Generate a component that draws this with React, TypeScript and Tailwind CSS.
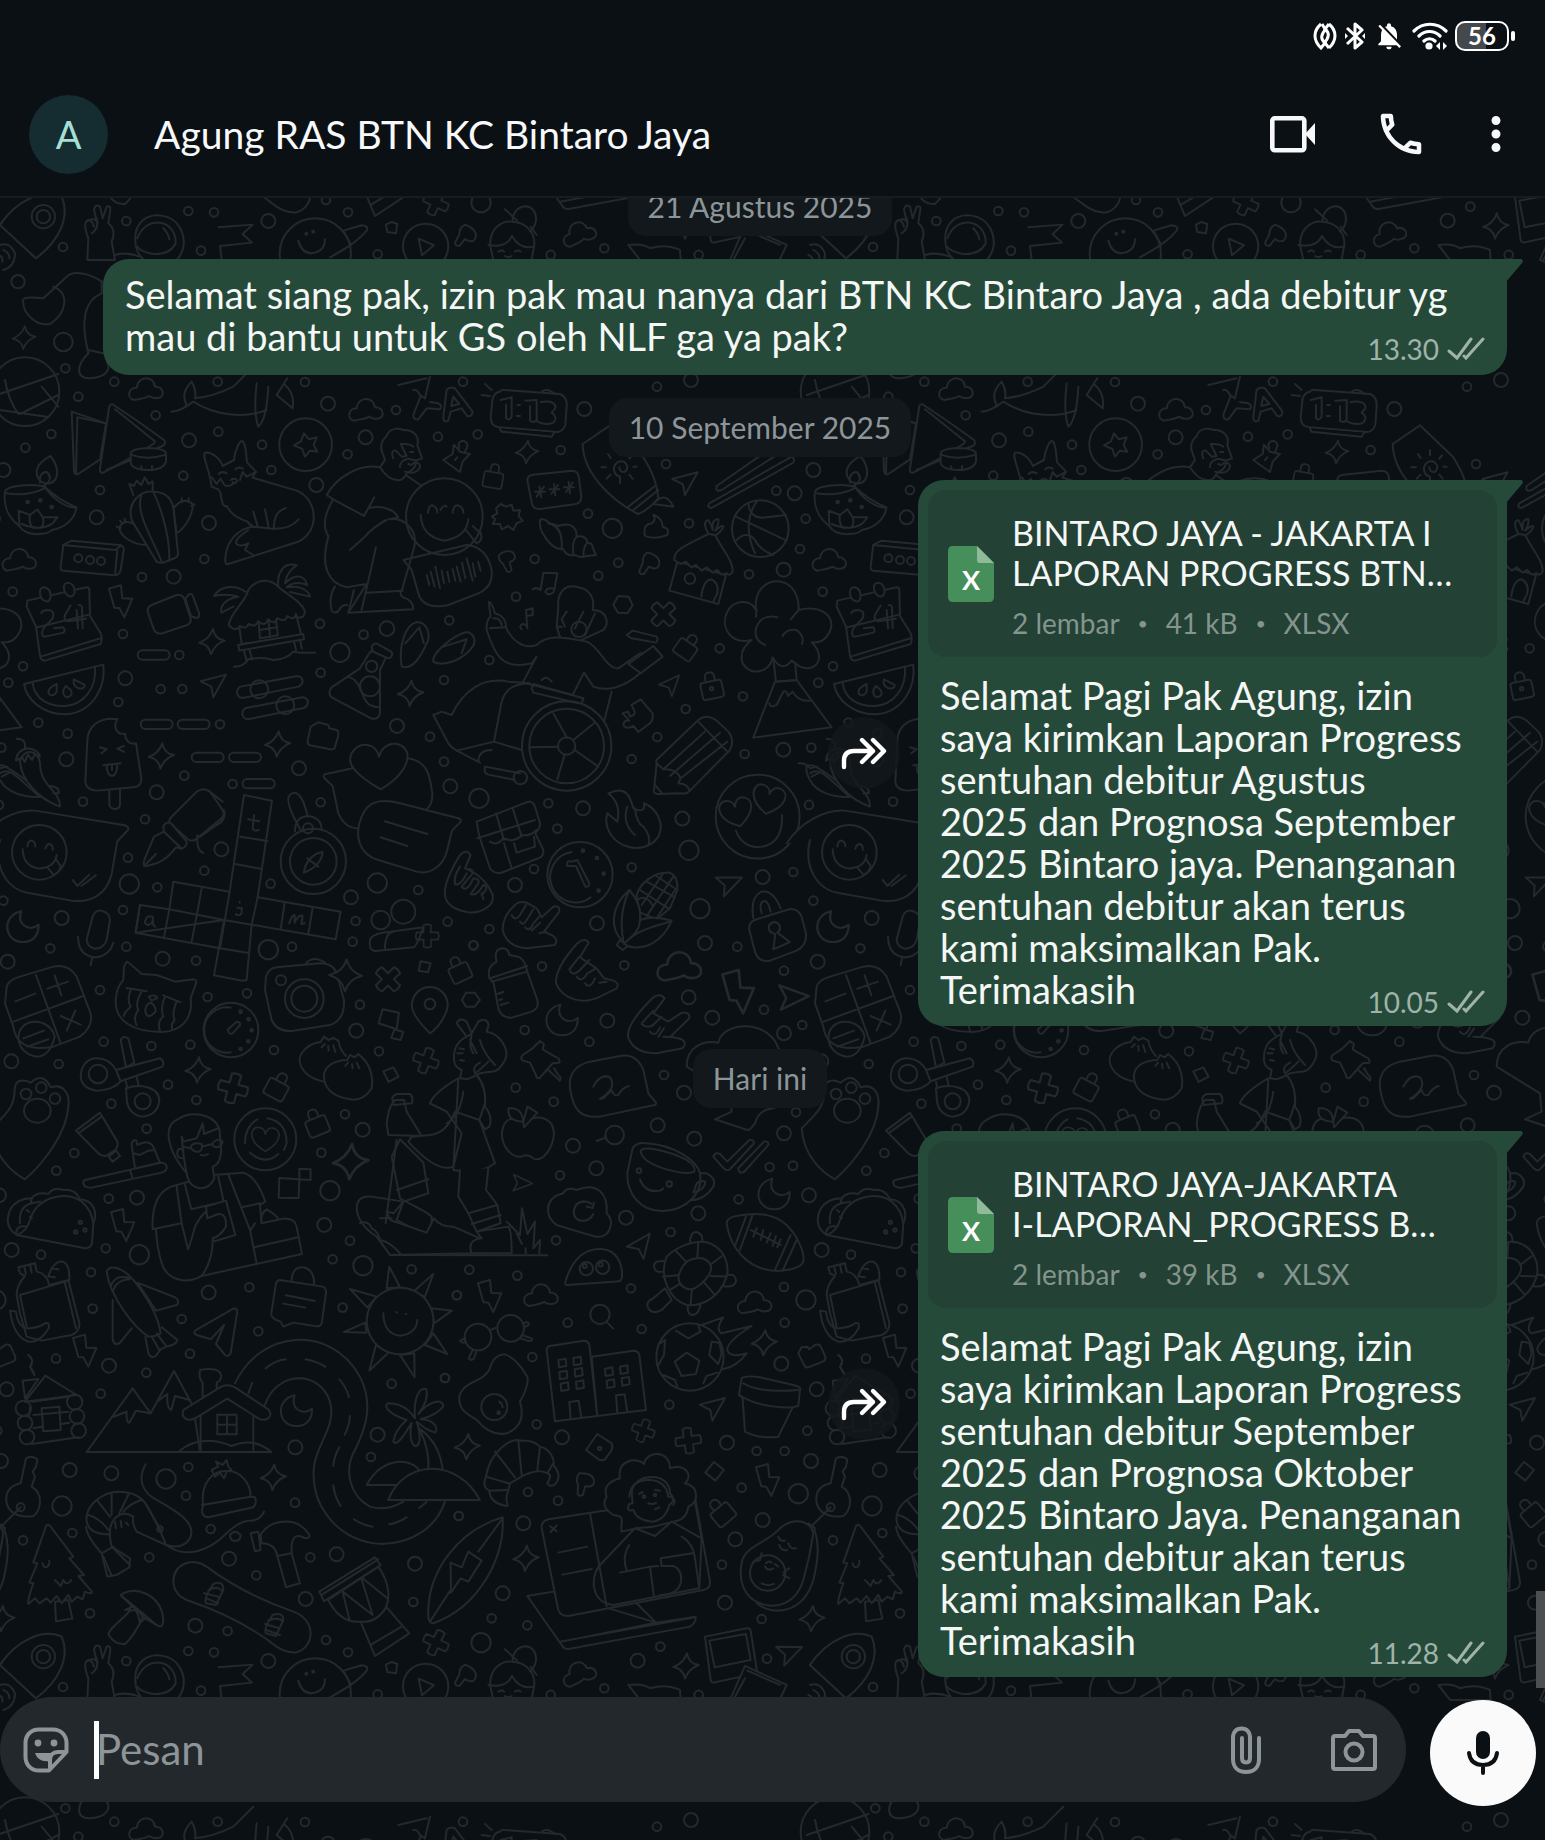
import React from 'react';
import { MdMoreVert, MdNotificationsOff, MdOutlineCall } from 'react-icons/md';

type Circle = [number, number, number];
type StampName = 'spark' | 'bolt' | 'cloud' | 'arrow' | 'plus' | 'lock' | 'moon' | 'pill' | 'flag' | 'heart';
type Stamp = [StampName, number, number, number?, number?];

interface DoodlePanel {
  x: number;
  y: number;
  circles: Circle[];
  stamps: Stamp[];
  shapes: string[];
  lines: string[];
}

const TILE_W = 810;
const TILE_H = 1440;

const STAMPS: Record<StampName, string> = {
  spark: 'M3,-38 Q8,-8 38,-3 Q8,8 -3,38 Q-8,8 -38,3 Q-8,-8 3,-38Z',
  bolt: 'M-36,-38 L0,-48 L4,-9 L34,-8 L10,48 L-5,20 L-20,19Z',
  cloud: 'M-35,32 C-58,28 -55,-5 -28,-5 C-25,-42 24,-42 27,-8 C55,-10 60,28 30,26 C20,28 16,24 10,20 C-4,28 -20,28 -35,32Z',
  arrow: 'M-38,-8 L38,-28 L0,40 L-6,8Z',
  plus: 'M-13,-38 Q0,-44 13,-38 L12,-13 L38,-13 Q44,0 38,13 L13,13 L13,38 Q0,44 -13,38 L-13,13 L-38,13 Q-44,0 -38,-13 L-13,-13Z',
  lock: 'M-24,-18 L24,-18 Q32,-18 32,-10 L32,26 Q32,34 24,34 L-24,34 Q-32,34 -32,26 L-32,-10 Q-32,-18 -24,-18Z M-14,-18 V-32 C-14,-50 14,-50 14,-32 V-18',
  moon: 'M-6,-46 C-70,-30 -54,48 0,46 C30,46 48,24 46,-6 C20,16 -20,-4 -6,-46Z',
  pill: 'M-34,-14 H34 A14,14 0 0 1 34,14 H-34 A14,14 0 0 1 -34,-14Z',
  flag: 'M-20,-32 C10,-40 30,-30 28,-8 C24,4 12,2 4,4 L2,30 Q-8,38 -14,30 L-18,2 Q-30,-16 -20,-32Z',
  heart: 'M0,40 C-70,0 -50,-50 -22,-44 C-8,-42 0,-32 0,-20 C4,-34 14,-44 28,-42 C60,-34 58,8 0,40Z',
};

// every panel is drawn at three times its final size
const PANELS: DoodlePanel[] = [
  {
    x: 0,
    y: 60,
    circles: [[54, 665, 20], [190, 846, 28], [196, 925, 13]],
    stamps: [['spark', 72, 833, 0, 0.9]],
    shapes: ['M70,730 C60,710 90,710 130,715 L200,650 C220,630 270,640 305,665 L305,700 C255,720 240,780 265,880 C225,920 230,955 270,955 C330,950 330,920 320,905 L480,880 L480,660 L305,665'],
    lines: ['M160,680 C210,700 200,760 150,792 C110,800 70,760 70,730', 'M265,870 L310,880'],
  },
  {
    x: 0,
    y: 380,
    circles: [
      [343, 5, 13], [235, 50, 13], [467, 106, 13], [154, 162, 13], [76, 203, 13], [655, 155, 13], [786, 194, 13],
      [653, 5, 13], [915, 6, 13], [1188, 90, 13], [1314, 170, 13], [1043, 223, 13], [814, 270, 13], [550, 287, 13],
      [300, 330, 13], [613, 537, 13], [426, 591, 13], [38, 635, 13], [369, 762, 13], [538, 825, 13], [69, 859, 13],
      [25, 908, 13], [482, 927, 13], [547, 927, 13], [355, 966, 13], [115, 1028, 13], [203, 1061, 13], [660, 1033, 13],
      [553, 1187, 13], [698, 1212, 13], [249, 1265, 13], [435, 1318, 13], [960, 731, 13], [1091, 764, 13],
      [962, 878, 13], [1348, 721, 13], [1332, 900, 13], [1290, 1070, 13], [1332, 1145, 13], [962, 1267, 13],
      [1389, 5, 13], [567, 181, 21], [984, 71, 21], [1097, 172, 21], [949, 315, 21], [290, 412, 21], [627, 429, 21],
      [521, 590, 21], [1161, 746, 22], [376, 895, 21], [199, 1138, 21], [1191, 1038, 21], [897, 1165, 21],
      [470, 1237, 21], [664, 1408, 21], [1351, 1219, 21], [10, 270, 21], [1020, 817, 29], [917, 194, 79],
      [75, 35, 103], [235, 535, 12], [270, 540, 12], [303, 543, 12], [83, 366, 4], [121, 361, 4], [155, 381, 4],
      [778, 928, 27], [856, 976, 27], [1115, 859, 17], [1110, 919, 30], [924, 1345, 15],
    ],
    stamps: [
      ['spark', 636, 785], ['spark', 1232, 940], ['spark', 484, 1128], ['spark', 833, 1092], ['bolt', 363, 664],
      ['cloud', 58, 540], ['cloud', 438, 28], ['cloud', 1098, 90], ['arrow', 640, 912], ['pill', 461, 825],
      ['pill', 470, 1033], ['pill', 581, 1033], ['pill', 623, 1132], ['pill', 735, 1132], ['pill', 776, 1211],
    ],
    shapes: [
      // samosas and bowl
      'M215,95 L318,130 L300,238 L235,282 Q222,285 222,270Z',
      'M328,78 Q335,68 345,78 L408,120 L492,180 Q500,190 488,198 L392,234 L310,278 Q298,280 300,266Z',
      'M392,222 Q392,206 445,204 Q500,206 498,222 L498,245 Q490,270 445,270 Q392,268 392,245Z',
      // oil lamp
      'M15,335 C20,315 100,310 134,320 C160,345 200,370 229,382 C225,420 190,445 155,450 Q150,462 110,463 Q70,460 58,438 C20,410 10,370 15,335Z',
      'M151,228 C170,250 178,280 165,300 C150,318 118,312 111,285 C105,260 130,240 151,228Z',
      // cactus
      'M400,345 L388,312 L402,318 L410,302 L424,315 L434,292 L446,312 L458,304 L458,335',
      'M520,385 C540,360 560,355 578,372 C580,400 560,440 530,460Z',
      'M402,432 C380,420 362,428 358,445 C362,470 400,495 440,495Z',
      'M470,545 L395,420 C380,370 420,330 460,335 C500,335 520,360 522,400 L534,520 Q534,530 525,534 L490,548 Q480,550 470,545Z',
      // fox
      'M635,320 C630,270 605,230 615,218 C635,215 660,235 668,258 L702,240 C705,210 720,175 730,185 C742,210 738,240 742,248 L768,275 L757,293 L890,332 C960,360 960,470 880,490 L685,552 Q675,555 676,540 C676,490 710,445 760,440 L742,425 C700,410 690,395 680,378 C660,385 668,335 655,328Z',
      // box with dots
      'M190,495 L215,482 L365,496 L372,506 L362,570 Q358,585 345,586 L190,572 Q180,570 182,560Z',
      // calendar
      'M82,662 L260,622 Q268,622 268,632 L270,708 L302,760 Q308,775 302,792 L135,842 Q122,842 120,828 L108,740 L80,680Z',
      'M120,640 Q118,622 134,622 Q152,626 152,650 Q150,666 138,664 Q122,660 120,640Z',
      'M192,626 Q190,608 206,608 Q224,612 224,636 Q222,650 210,650 Q194,644 192,626Z',
      // camcorder
      'M443,695 Q442,680 455,675 L530,645 Q545,642 552,655 L572,715 Q574,728 562,735 L488,760 Q470,764 462,750Z',
      'M556,655 L568,642 Q578,640 580,652 L598,702 Q598,714 588,714 L573,708Z',
      // watermelon
      'M72,912 L310,854 C318,920 280,995 200,1003 C130,1005 80,960 72,912Z',
      // beach hut
      'M738,636 C700,610 660,620 642,648 Q680,640 715,650 C680,655 660,675 664,698 L700,680',
      'M835,620 C830,580 850,545 890,556 Q860,575 855,610 C890,575 915,590 922,615 Q885,600 860,622 C900,615 925,630 930,650 L870,636',
      'M718,740 L725,792 L905,768 L890,710',
      'M686,735 C695,690 735,670 745,630 C770,595 810,595 835,620 C870,650 905,665 915,695 Q912,714 900,712 Q892,718 888,702 Q884,724 862,708 Q856,730 832,714 Q826,738 804,718 Q796,742 774,724 Q768,744 746,732 Q738,750 720,738 Q708,758 686,735Z',
      'M715,795 L910,762 L912,778 L718,812Z',
      // sliders
      'M722,920 L892,888 Q908,890 908,904 Q906,916 895,920 L728,954 Q712,952 711,938 Q712,924 722,920Z',
      'M738,984 L908,952 Q924,954 924,968 Q922,980 911,984 L744,1018 Q728,1016 727,1002 Q728,988 738,984Z',
      // flask
      'M1120,793 Q1128,788 1135,793 L1172,814 Q1180,820 1174,830 Q1168,838 1158,832 L1140,870 L1140,1000 Q1136,1020 1115,1016 L995,952 Q982,940 995,922 L1080,865 L1108,820 L1118,810 Q1112,800 1120,793Z',
      // ice lolly
      'M328,1225 L328,1275 Q332,1287 345,1287 Q358,1286 360,1275 L360,1225',
      'M262,1080 C265,1030 310,1010 352,1018 C338,1040 350,1065 376,1062 C374,1080 388,1095 408,1090 L424,1195 Q424,1222 400,1222 L290,1232 Q258,1230 256,1205Z',
      // chillies
      'M0,1180 C30,1160 50,1190 118,1250 C80,1255 20,1240 0,1200',
      'M60,1140 C80,1100 115,1115 120,1150 C120,1220 180,1230 180,1280 C120,1260 60,1200 60,1140Z',
      // flip flops
      'M1205,860 C1195,800 1215,735 1250,726 C1280,726 1292,760 1283,785 C1262,830 1240,870 1205,860Z',
      'M1300,845 C1295,820 1360,765 1400,756 C1425,760 1428,785 1418,800 C1390,840 1330,862 1300,845Z',
      // camera tag
      'M932,1040 L955,1027 L985,1035 L988,1045 L1010,1050 Q1018,1055 1014,1070 L1004,1104 Q1000,1110 990,1108 L930,1096 Q920,1092 924,1078Z',
      // speech bubble with tongue face
      'M-70,1390 C-30,1330 40,1288 105,1292 L370,1335 Q388,1338 384,1350 L352,1384 L335,1482 C320,1545 270,1570 215,1562 L90,1540 C20,1530 -20,1460 0,1380',
      // heart bubbles
      'M1058,1165 L975,1183 Q968,1188 973,1194 L998,1218 L1015,1300 Q1035,1345 1075,1345',
      'M1224,1135 C1290,1145 1290,1200 1297,1240 Q1298,1275 1280,1288',
      'M1142,1228 C1060,1180 1040,1150 1055,1120 C1080,1080 1130,1090 1137,1130 C1150,1080 1210,1080 1222,1120 C1228,1160 1190,1200 1142,1228Z',
      'M1125,1268 C1150,1258 1180,1265 1200,1270 L1375,1315 Q1388,1320 1380,1328 L1356,1352 L1342,1410 C1330,1460 1290,1485 1250,1475 L1135,1440 C1080,1425 1060,1370 1085,1310 Q1100,1275 1125,1268Z',
      // man carrying an emoji
      'M1140,262 C1080,250 1010,290 980,345 L1000,358 C950,440 980,490 1040,497 C1110,497 1110,440 1160,420 L1195,412 C1180,385 1140,375 1105,385 L1123,352 L1092,408 L1000,358',
      'M985,470 C960,560 985,610 1040,622 L1100,612 L1045,698 L1240,688 Q1240,660 1208,652 Q1196,640 1206,630 L1243,500 C1255,450 1210,410 1170,418',
      'M1148,220 C1138,200 1145,180 1160,168 C1170,140 1200,145 1210,150 C1240,148 1260,170 1252,195 L1266,235 L1248,242 C1250,275 1215,275 1218,285 Q1205,305 1190,300 Q1165,300 1140,262 L1155,240Z',
      // star pin
      'M1330,240 L1358,222 L1362,194 L1380,215 L1410,222 L1388,245 L1380,276Z',
    ],
    lines: [
      'M-10,45 L175,-18 M0,90 L140,110 M15,0 Q25,60 55,102 M125,20 L175,80 M60,102 L175,45',
      'M912,160 L927,178 L950,172 L941,195 L952,215 L930,212 L915,230 L907,207 L882,196 L903,184Z',
      'M515,95 Q550,90 560,75 Q540,40 575,5 Q590,30 585,55 Q640,50 700,20 L760,-40 M515,95 Q540,95 580,65 C650,110 740,115 800,90 M770,10 Q760,100 775,140 Q800,120 805,20 M830,45 L878,85 Q885,40 855,15 M862,-5 L830,45',
      'M1240,30 Q1250,25 1260,45 L1275,55 L1290,-10 M1262,48 L1240,105 Q1240,120 1255,118 L1280,85 L1320,88 Q1328,75 1315,70 L1290,66 M1195,15 L1280,-5',
      'M1330,110 L1340,30 Q1350,18 1365,25 L1418,95 Q1416,112 1402,108 L1385,85 L1352,95 L1345,122 Q1330,130 1330,110 M1360,50 L1378,72 L1354,78Z',
      'M1378,205 Q1370,185 1390,182 Q1408,190 1400,205 L1395,215 M1365,240 L1372,232',
      'M232,112 L318,130 M232,112 L228,282 M392,240 L320,270 M345,88 L460,180 Q470,185 460,192 L440,204 M392,224 Q440,242 498,224',
      'M424,258 V266 M456,258 V266',
      'M120,308 Q116,278 140,276 Q156,290 146,306 L128,320 M135,320 C150,345 190,385 229,382 M20,340 Q80,350 134,325 M58,438 L56,392 L90,405 L112,388 L128,412 L172,412 L158,430 Q120,455 65,432 M90,405 Q85,430 100,444 M128,412 Q135,435 120,444',
      'M424,345 C405,400 460,480 485,545 M460,335 C490,400 510,480 508,542 M350,440 L362,444 M360,422 L368,430 M374,416 L376,426 M545,355 L546,366 M566,355 L566,366 M584,374 L574,378',
      'M656,282 Q665,272 680,280 M706,268 Q715,258 728,266 M636,292 L650,312 L662,296 L674,316 Q690,322 700,310 M720,300 L728,276 L740,290 L768,276 M692,300 Q705,292 712,302 Q704,316 698,306 M760,395 L772,436 M795,388 L806,442 M822,445 Q820,395 858,384 M742,425 L755,440 L820,446 Q870,448 896,418 M745,450 Q700,480 710,492 Q720,502 745,490 L735,510 L760,525',
      'M190,495 L345,510 L360,500 M352,512 L345,585',
      'M112,742 L268,704 M122,830 L302,775',
      'M124,700 Q126,690 146,690 Q166,692 158,715 L130,745 Q120,770 136,770 L190,758 Q198,752 190,742 L162,745 M212,676 L195,705 Q190,722 205,724 L258,716 M236,676 Q242,672 246,682 L248,745 M230,690 L234,745',
      'M98,910 C105,960 150,980 195,978 C250,975 290,925 285,862 M170,912 Q140,925 146,942 Q160,952 170,935Z M198,918 Q180,940 200,952 Q222,948 212,930Z M222,898 Q216,915 235,925 Q256,928 254,915Z',
      'M776,728 L780,775 L834,766 L828,720 M806,724 L810,770 M778,750 L832,742 M732,812 L740,842 M748,808 L756,838 M882,784 L888,810 M900,780 L906,806 M702,860 Q730,862 745,838 Q790,830 820,840 Q860,838 880,815 Q910,820 945,818',
      'M1115,813 L1158,832 M1042,890 C1090,900 1080,960 1110,975 Q1130,985 1140,980',
      'M300,1102 L320,1108 L304,1120 M372,1098 L352,1106 L372,1116 M310,1156 L362,1150 M320,1156 Q320,1186 336,1188 Q352,1184 352,1152 M336,1155 V1170',
      'M50,1076 Q80,1076 74,1105 M48,1142 Q50,1110 85,1105 Q115,1110 120,1130 L104,1124 L96,1140 L84,1124 L74,1146 L66,1132Z M0,1165 L22,1160 M5,1190 L28,1178 M148,1218 Q180,1220 176,1240 L160,1240',
      'M1216,790 L1258,742 L1272,790 M1330,800 L1400,778 L1385,820',
      'M82,1400 Q84,1382 95,1382 Q106,1386 106,1400 M136,1406 Q140,1392 150,1392 Q160,1398 158,1410 M68,1408 Q70,1460 118,1466 Q165,1462 170,1425 M142,1462 L160,1484 Q180,1478 182,1458 L168,1438 M218,1500 L232,1518 L268,1484 M244,1518 L288,1486',
      'M905,1355 Q850,1260 870,1245 Q890,1225 910,1265 L924,1310 M885,1355 Q885,1310 924,1308 Q965,1312 965,1350',
      'M1154,1324 L1282,1362 M1142,1372 L1222,1398',
      'M1005,620 Q985,650 995,692 Q1006,704 1018,690 Q1022,675 1042,675 M1062,630 L1045,698 M1128,502 L1085,690 M1100,638 L1208,632 M1050,510 L1090,475 Q1120,440 1160,420 M1218,285 L1265,318',
      'M1180,235 Q1170,210 1188,212 L1205,230 L1220,228 L1202,192 Q1230,190 1240,200 M1230,216 L1240,216 M1200,262 Q1200,240 1225,236 L1250,242 M1225,252 Q1238,258 1240,250 Q1262,245 1260,262 Q1250,285 1215,275',
    ],
  },
  {
    x: 440,
    y: 380,
    circles: [
      [113, 163, 13], [362, 210, 13], [651, 20, 13], [678, 252, 13], [444, 401, 13], [747, 430, 13], [284, 537, 13],
      [475, 587, 13], [535, 548, 13], [228, 650, 13], [148, 840, 13], [1009, 332, 13], [1097, 416, 13],
      [1080, 507, 13], [927, 583, 13], [839, 805, 13], [909, 949, 13], [737, 987, 13], [652, 1071, 13],
      [575, 1137, 13], [914, 1122, 13], [325, 1270, 13], [352, 1346, 13], [1107, 1275, 13], [1114, 1103, 13],
      [433, 87, 21], [753, 0, 21], [1064, 340, 21], [1031, 569, 21], [1030, 1109, 21], [429, 1285, 21],
      [727, 1316, 21], [517, 445, 29], [117, 1255, 29], [747, 1411, 29], [13, 410, 115], [961, 446, 85],
      [380, 1098, 134], [380, 1098, 112], [380, 1098, 26], [953, 1310, 126], [750, 596, 16], [815, 926, 5],
      [420, 1484, 98], [417, 748, 23], [241, 1193, 20], [1228, 1417, 82],
    ],
    stamps: [
      ['spark', 261, 216, 0, 0.9], ['arrow', 735, 305], ['arrow', 690, 915, -10, 0.85], ['plus', 670, 703, 45],
      ['lock', 160, 293, 10, 0.9], ['lock', 740, 803, 35, 0.95], ['lock', 815, 922, -12],
      ['flag', 625, 555, 30], ['flag', 204, 545, -20, 0.9], ['heart', 890, 1300, -15], ['heart', 985, 1262, 10],
    ],
    shapes: [
      // clock 1:13
      'M180,35 Q185,28 195,30 L360,42 Q382,50 380,80 L376,135 Q368,156 350,156 L178,142 Q152,140 152,110 L158,55 Q165,36 180,35Z',
      'M180,145 L184,155 L335,170 L342,158',
      'M262,300 Q262,286 280,284 L395,272 Q412,272 416,288 L424,350 Q424,368 408,372 L300,387 Q280,388 276,372Z',
      'M156,410 L172,400 L168,385 L182,372 L198,380 L215,374 L220,392 L240,390 L236,408 L248,422 L230,430 L220,450 L205,438 L185,448 L180,432 L158,432 L166,418Z',
      // shell
      'M300,420 Q310,412 330,430 L355,438 C390,425 410,440 410,470 Q440,465 442,488 L455,492 Q460,510 468,525 L440,528 Q420,535 405,525 Q380,530 370,508 C330,510 295,450 300,420Z',
      // shawl
      'M428,192 L510,136 L610,232 C640,280 650,310 655,355 Q625,390 595,402 C530,370 430,290 428,192Z',
      'M655,358 Q680,340 700,380 L640,372Z',
      'M614,455 Q610,435 635,430 Q650,420 640,404 Q668,415 668,440 Q690,445 682,465 Q650,478 620,470 Q610,465 614,455Z',
      // fort tower
      'M712,545 L688,632 L835,672 L858,585Z',
      'M703,540 C700,510 730,500 805,462 L826,465 C840,500 880,540 878,575 Q870,590 860,580 L845,584 L832,570 L818,578 L800,562 L785,572 L768,555 L754,562 L738,545 L722,552Z',
      // chopsticks
      'M830,318 L1035,175 L1050,200 L845,330 Q825,338 830,318Z',
      'M808,370 L1055,230 Q1066,236 1060,248 L815,384 Q800,384 808,370Z',
      'M278,628 Q290,620 302,630 L310,578 L352,580 L342,635 Q325,650 316,636 Q320,622 342,626',
      'M520,674 L535,648 L566,650 L578,676 L562,700 L534,698Z',
      // flower tree volcano
      'M1005,905 L940,1073 L1175,1042 L1070,900Z',
      'M948,690 C935,580 1080,570 1076,690 C1150,670 1200,720 1160,770 Q1145,790 1115,787 C1160,830 1130,880 1080,860 L1055,842 Q1025,880 998,832 C990,880 930,890 908,850 Q895,810 935,780 C870,795 840,740 862,695 C880,660 930,655 948,690Z',
      // pencil
      'M650,1150 Q645,1140 655,1135 L775,1020 Q800,1000 830,1022 L865,1055 Q885,1080 870,1110 L750,1232 Q742,1242 730,1240 L650,1242 Q640,1240 642,1230Z',
      // wheelchair figure
      'M355,680 C350,640 375,610 415,622 C450,628 465,655 458,690 C500,690 510,730 490,750 L420,782 Q390,800 365,788 L350,740Z',
      'M146,665 Q155,665 165,700 Q200,710 198,742 C215,780 250,810 290,795 C320,765 360,768 440,785 C480,800 500,870 535,865 L600,820 Q625,820 628,832 L600,880 C550,925 500,935 460,920 L432,878 L398,945 L248,908 L290,830 L275,850 C190,870 165,830 140,750 Q138,720 152,710Z',
      'M560,765 L578,752 L650,770 Q656,778 648,788 L575,775Z M565,852 L640,798 L668,830 L602,880Z',
      'M-20,1005 L5,995 L35,1005 C70,930 130,890 205,905 L270,910 C200,910 185,950 180,990 L162,1085 L50,1112 Q30,1100 25,1090Z',
      // puzzle
      'M548,1000 L565,995 L570,1010 Q590,1005 582,990 L575,975 L602,958 L638,1000 Q640,1020 630,1030 L595,1056 L580,1038 Q560,1050 550,1035 Q552,1020 568,1022Z',
      // flame
      'M505,1240 C560,1215 570,1250 580,1285 C610,1300 615,1285 612,1270 C650,1285 675,1330 655,1370 C635,1400 600,1408 570,1402 C515,1390 490,1340 502,1300 L532,1325 C540,1290 530,1260 505,1240Z',
      // gift box
      'M110,1325 L265,1265 Q280,1265 285,1280 L300,1330 Q300,1350 285,1358 L310,1410 Q312,1430 295,1435 L180,1480 Q160,1480 150,1465 L118,1370Z',
      // chilli pair
      'M1100,1160 C1120,1145 1140,1170 1260,1250 C1200,1255 1090,1220 1100,1160Z',
    ],
    lines: [
      'M182,60 L215,52 V110 Q208,124 198,115 V75 M232,75 h8 M230,108 h10 M256,62 L290,60 V120 Q280,130 270,122 V78 M302,66 Q350,60 346,85 L335,98 Q355,110 340,128 Q320,138 292,125 M305,35 Q320,22 345,42 M125,45 L150,48 M135,12 L155,30',
      'M285,335 L315,335 M298,320 L304,352 M290,350 L312,320 M328,328 L358,328 M342,312 L346,346 M334,342 L354,315 M372,322 L402,322 M386,306 L390,340 M378,336 L398,308',
      'M565,380 L645,318 M580,390 L655,330 M540,290 Q520,285 522,262 Q530,240 552,245 Q570,260 556,275 Q540,280 538,262 M540,226 V210 M512,234 L504,222 M498,262 H484 M512,284 L500,296 M540,292 V310 M568,284 L578,296 M580,260 H590 M568,236 L576,226',
      'M784,650 Q790,600 815,598 Q838,610 832,640 L820,665 M805,460 Q785,425 805,420 Q812,430 818,450 Q815,415 835,418 Q838,430 826,452 Q850,430 850,442 Q840,460 826,466',
      'M325,430 Q370,440 365,505 M410,470 Q395,485 400,522 M442,488 Q430,500 430,530',
      'M888,410 L1040,482 M925,370 Q930,420 980,412 L1038,405 M945,520 Q905,430 950,365 M890,480 Q920,450 945,480 Q960,510 1000,525',
      'M948,710 L950,690 M1052,718 L1076,690 M975,795 Q940,780 948,745 Q965,700 1012,712 M1028,768 Q1040,745 1070,750 Q1095,770 1086,792 M1000,835 L1008,905 L1070,900 L1066,855 M988,970 Q990,985 1010,975 L1030,935 Q1040,930 1044,948 L1058,935 Q1075,965 1110,962',
      'M650,1150 L670,1168 L795,1055 M670,1168 Q710,1165 722,1195 L862,1085 M722,1195 L715,1210 Q745,1212 748,1232 M690,1188 L840,1058 M775,1025 L862,1115 M645,1215 L665,1238',
      'M430,695 L405,745 M465,700 L435,765 M380,695 L365,718 L375,740 M352,740 L366,740 M160,715 Q180,712 185,735 M150,745 L195,742',
      'M380,1072 L340,1000 M400,1080 L462,1030 M404,1110 L475,1160 M374,1124 L352,1198 M354,1100 L270,1102 M275,925 L280,912 L430,955 Q428,972 415,970 L280,938Z M305,900 Q320,885 335,905 M515,935 L492,1025 M135,1160 Q130,1180 145,1184 L225,1200 M135,1160 L240,1180 M162,1085 L245,1110 M115,1145 Q115,1110 155,1110 M50,1112 L120,1148',
      'M562,1280 Q545,1330 585,1365 M585,1285 Q590,1330 610,1340 Q635,1370 625,1395',
      'M888,1352 Q905,1400 955,1402 Q1030,1395 1026,1305',
      'M112,1375 L285,1320 M168,1300 L192,1380 M218,1285 L245,1370 M150,1385 Q170,1400 190,1375 Q225,1390 245,1365 Q270,1370 290,1350 M192,1390 L215,1465 M222,1390 L230,1418 L285,1400 L282,1370',
      'M1,390 Q12,372 20,380 M38,398 Q40,375 55,376 Q70,382 70,398 M-36,398 Q-34,376 -22,376 Q-8,382 -8,398 M85,418 Q80,470 13,482 Q-55,470 -58,405 M76,448 L110,490 Q130,480 122,460 L98,438',
      'M-110,540 L80,495 Q140,500 155,570 Q160,620 115,640 L25,675 Q-40,690 -62,650 L-85,570Z',
      'M-40,585 L-32,615 M-28,575 L-16,620 M-14,560 L0,625 M5,572 L12,610 M22,575 L28,605 M38,568 L46,602 M50,560 L62,605 M66,548 L76,595 M80,535 L98,602 M98,550 L106,590 M114,545 L122,572',
      'M245,748 Q235,740 248,732 Q265,735 262,745 L258,690 L278,685 V705 L260,708',
      'M1076,1150 Q1100,1148 1110,1165 M1120,1180 L1140,1195 L1115,1200',
    ],
  },
  {
    x: 0,
    y: 840,
    circles: [
      [384, 53, 13], [613, 92, 13], [472, 142, 13], [812, 131, 13], [369, 210, 13], [151, 325, 13], [379, 320, 13],
      [588, 362, 13], [876, 320, 13], [1255, 150, 13], [1067, 243, 13], [1058, 305, 13], [1343, 245, 13],
      [300, 450, 13], [623, 471, 13], [741, 460, 13], [1080, 494, 13], [311, 605, 13], [454, 618, 13], [571, 614, 13],
      [822, 630, 13], [176, 672, 13], [504, 734, 13], [1137, 634, 13], [334, 791, 13], [589, 780, 13],
      [1035, 823, 13], [440, 866, 13], [964, 938, 13], [223, 939, 13], [169, 992, 13], [326, 1076, 13],
      [317, 1225, 13], [1050, 1202, 13], [998, 1258, 13], [123, 1244, 13], [273, 1297, 13], [748, 1342, 13],
      [1235, 1288, 13], [278, 1406, 13], [1028, 1403, 13], [1371, 1366, 13], [10, 182, 13], [1420, 316, 13],
      [185, 234, 21], [23, 365, 21], [488, 356, 21], [1053, 172, 21], [1069, 572, 21], [34, 664, 21], [1088, 869, 21],
      [411, 1073, 21], [973, 1155, 21], [35, 1230, 21], [626, 1358, 21], [388, 132, 29], [1132, 129, 29],
      [805, 329, 29], [990, 1052, 29], [418, 1244, 29], [1089, 1277, 29], [118, 37, 82], [940, 64, 98],
      [940, 64, 70], [693, 570, 82], [796, 898, 93], [722, 515, 4], [746, 538, 4], [755, 571, 4], [745, 604, 4],
      [722, 627, 4], [1142, 240, 28], [1210, 215, 36],
    ],
    stamps: [
      ['spark', 594, 690], ['spark', 1052, 965, 0, 1.4], ['moon', 69, 260], ['plus', 1164, 418, 45],
      ['plus', 699, 745, 15, 1.1], ['lock', 832, 742, 28], ['lock', 1378, 392, -25, 0.95],
      ['lock', 950, 852, -22], ['bolt', 369, 1155], ['heart', 796, 900, 0, 0.85], ['plus', 1282, 288, 0, 0.85],
      ['plus', 1278, 662, 20, 0.95],
    ],
    shapes: [
      // pen nib and ink
      'M510,-50 Q505,-60 515,-70 L590,-145 Q610,-160 630,-145 L668,-90 Q675,-75 665,-65 L585,0 Q570,5 560,-5Z',
      'M490,-40 Q500,-60 515,-48 L560,5 Q562,20 545,26 L492,-20Z',
      'M462,-10 L492,-25 L545,26 L528,22 Q505,55 470,70 L440,78 Q428,78 432,62Z',
      // crossword
      'M520,125 L689,155 L732,-135 L816,-118 L773,172 L1022,215 L1007,298 L755,254 L740,420 L727,422 L642,406 L672,240 L407,278 L420,195 L508,208Z',
      // microphone
      'M278,230 Q285,210 305,212 Q330,218 330,240 L320,300 Q312,325 285,326 Q260,320 260,298Z',
      // calculator
      'M20,440 Q25,420 60,410 L160,380 Q205,370 230,410 L272,520 Q280,560 240,590 L160,620 Q50,640 40,560 L15,490Z',
      // crying cat
      'M380,365 Q388,368 425,402 L470,405 L525,425 L580,418 Q592,420 588,430 L572,475 C580,540 540,575 485,576 C400,575 345,545 347,480 Q350,440 370,420 L372,380Z',
      // camera
      'M798,410 Q805,385 830,382 L960,370 Q1000,370 1010,400 L1032,480 Q1035,540 990,555 L875,573 Q830,575 815,540 L795,450Z',
      'M1040,358 Q1048,395 1086,408 Q1048,415 1035,454 Q1028,418 988,405 Q1030,395 1040,358Z',
      // scissors
      'M362,600 Q370,585 385,595 L403,668 L378,682Z',
      'M242,710 C245,640 320,640 348,690 L480,655 Q495,662 488,680 L362,724 Q340,750 290,752 Q245,745 242,710Z',
      'M378,745 C420,730 480,740 478,785 Q470,828 425,830 Q380,820 380,770Z',
      // dumplings
      'M970,725 C900,710 890,660 905,640 Q925,610 962,606 L972,590 L985,600 L1000,594 L1015,602 Q1020,630 1038,648',
      'M972,705 C975,675 1010,660 1042,660 L1050,645 L1064,652 L1075,642 L1088,654 C1115,680 1120,720 1115,745 Q1090,785 1050,778 C1000,770 970,745 972,705Z',
      'M1110,300 Q1115,280 1170,275 L1270,262 Q1250,320 1240,322 L1125,333 Q1105,330 1110,300Z',
      'M1290,580 C1250,540 1232,510 1236,490 C1245,425 1335,425 1343,490 C1345,515 1320,560 1290,580Z',
      'M1148,508 L1197,518 L1190,568 L1136,550Z M1183,568 L1210,576 L1202,600 L1174,594Z M1150,694 L1180,682 L1196,710 L1166,726Z M1262,364 L1292,370 L1284,397 L1256,392Z',
      'M1386,480 L1398,458 L1424,458 L1440,480 L1424,500 L1398,500Z',
      // paw
      'M-25,865 C20,820 45,800 44,745 Q50,710 92,728 Q130,695 152,742 C190,730 210,760 205,800 C200,880 130,970 75,1018 C40,1000 -20,950 -25,865Z',
      // paint tube
      'M228,872 L300,818 L352,905 Q356,920 345,930 L318,948 Q305,950 295,940Z M326,950 L348,932 L360,948 L338,965Z',
      'M395,915 Q395,900 408,900 L412,915 Q450,895 462,925 L480,968 L405,985Z',
      'M255,1020 L485,968 Q502,970 500,985 Q498,995 485,998 L275,1043 Q255,1045 250,1032 Q248,1022 255,1020Z',
      // taco
      'M50,1185 Q10,1160 30,1110 Q50,1075 95,1075 Q110,1055 145,1062 Q160,1040 190,1050 Q225,1045 240,1078 C280,1080 295,1120 280,1150 L276,1210 Q272,1225 255,1225Z',
      // man with book
      'M458,1165 C455,1090 480,1045 530,1035 L640,1005 L730,998 Q770,1010 796,1085 L780,1095 L785,1150 L850,1136 Q885,1135 890,1160 L906,1242 L605,1308 C560,1335 500,1320 485,1270 Q470,1220 468,1168Z',
      'M560,1000 C500,930 490,860 530,840 C570,810 640,820 658,866 L662,910 Q668,970 638,980 L643,1015 Q630,1045 600,1045 Q570,1040 562,1010Z',
      // two boxes
      'M838,1014 L898,1018 L896,1074 L836,1073Z M898,986 L932,988 L932,1020 L898,1018Z',
      // shopping bottle
      'M50,1365 Q50,1335 75,1308 L60,1300 L55,1282 L105,1270 L110,1295 Q140,1300 148,1335 L205,1320 L238,1450 Q240,1475 215,1485 L125,1502 L80,1490 L60,1420Z',
      // plane
      'M412,1328 L525,1372 Q542,1385 530,1395 L468,1412Z',
      'M338,1380 V1500 Q345,1520 360,1508 L395,1465',
      'M320,1295 C330,1270 370,1285 400,1320 C440,1370 475,1430 482,1480 Q470,1490 445,1490 C400,1460 330,1370 320,1295Z',
      // robot bag
      'M840,1320 L968,1340 Q980,1345 978,1360 L965,1450 Q960,1462 945,1458 L880,1448 L850,1460 L842,1445 Q812,1435 814,1420 L828,1330 Q832,1320 840,1320Z',
    ],
    lines: [
      'M432,78 L468,42 M592,-15 Q590,35 610,38 M630,-145 L668,-115 M672,-90 Q680,-60 650,-45 L600,-10',
      'M508,208 L672,240 L755,254 M508,208 L492,292 M605,145 L590,228 L575,304 M689,155 L660,325 L742,338 M773,172 L755,254 M854,188 L842,268 M938,204 L925,282 M706,72 L785,87 M721,-10 L802,3 M407,278 L660,325 M407,278 L420,195',
      'M436,242 Q440,225 458,230 Q462,250 445,255 Q432,252 436,242 M458,230 L460,255 L466,260 M719,185 v3 M708,222 Q715,230 724,222 L726,205 L712,203 M868,250 Q875,225 884,225 L884,248 Q895,222 908,228 L904,252 L914,250',
      'M745,-62 L778,-56 M762,-75 L758,-35 Q762,-25 776,-30',
      'M912,98 C915,65 940,40 968,36 C965,65 945,85 912,98 M922,55 L955,80',
      'M234,290 Q235,350 290,352 Q330,345 340,308 M276,355 L272,376',
      'M108,405 L182,610 M40,545 L250,468 M46,484 L106,461 M142,446 L204,425 M164,406 L184,466 M182,528 L242,554 M226,512 L200,572 M70,595 L132,572 M82,620 L145,598 M55,595 C55,530 150,530 164,590 Q150,650 110,650 Q60,640 55,595',
      'M380,444 L440,454 M490,466 L542,487 M392,450 Q380,480 392,500 Q370,520 372,528 M424,456 Q405,490 415,510 Q398,530 410,555 M495,470 Q480,500 490,530 Q470,545 480,572 M530,485 Q515,520 524,540 Q510,555 518,570 M446,470 Q470,462 472,474 L455,482Z M436,508 Q440,490 452,488 Q470,500 466,515 Q455,530 444,528 Q434,520 436,508',
      'M918,370 Q940,345 975,368 M692,503 A68,68 0 1 0 692,637 M684,568 L710,545 Q722,545 720,555 L698,580 Q685,585 684,568',
      'M913,476 m-58,0 a58,58 0 1 0 116,0 a58,58 0 1 0 -116,0 M913,476 m-39,0 a39,39 0 1 0 78,0 a39,39 0 1 0 -78,0 M843,421 m-15,0 a15,15 0 1 0 30,0 a15,15 0 1 0 -30,0',
      'M294,702 m-28,0 a28,28 0 1 0 56,0 a28,28 0 1 0 -56,0 M428,784 m-24,0 a24,24 0 1 0 48,0 a24,24 0 1 0 -48,0 M348,690 L362,724 M378,725 L382,745 M410,710 L416,738',
      'M112,812 m-40,0 a40,36 0 1 0 80,0 a40,36 0 1 0 -80,0 M78,762 m-16,0 a16,16 0 1 0 32,0 a16,16 0 1 0 -32,0 M124,743 m-16,0 a16,16 0 1 0 32,0 a16,16 0 1 0 -32,0 M165,776 m-16,0 a16,16 0 1 0 32,0 a16,16 0 1 0 -32,0',
      'M965,622 L975,612 M985,618 L986,632 M1000,616 L1006,636 M1036,678 L1044,668 M1056,672 L1058,685 M1070,668 L1078,685',
      'M1155,325 Q1155,280 1180,275 M1290,492 m-16,0 a16,16 0 1 0 32,0 a16,16 0 1 0 -32,0',
      'M238,878 L305,830 M390,990 L398,1015 M400,940 L420,945 L445,932 L465,930',
      'M50,1185 Q80,1175 90,1140 C110,1070 200,1050 245,1085 Q275,1110 280,1150 M60,1150 Q55,1100 95,1090 L120,1085 M95,1075 L92,1090 M80,1110 l8,6 M90,1130 l6,4 M48,1180 Q50,1155 80,1160 M241,1147 m-5,0 a5,5 0 1 0 10,0 a5,5 0 1 0 -10,0 M227,1176 m-5,0 a5,5 0 1 0 10,0 a5,5 0 1 0 -10,0 M255,1170 m-5,0 a5,5 0 1 0 10,0 a5,5 0 1 0 -10,0',
      'M545,890 L550,905 L590,895 L608,850 L612,882 L655,865 M550,930 Q530,920 532,945 Q535,955 550,955 M572,922 Q578,905 605,912 Q610,925 598,935 Q580,938 572,922 M638,910 Q650,892 668,905 Q665,920 650,922 Q636,920 638,910 M606,920 L636,912 M570,925 L550,920 M602,945 Q612,950 624,942 M545,890 C550,950 555,980 562,1010 M530,1040 L545,1150 L564,1228 Q575,1200 585,1160 Q600,1130 618,1115 M458,1168 L545,1150 M555,1035 L574,1108 L640,1092 M655,1010 L670,1080 M685,1005 L750,1170 L770,1270 M725,1102 L780,1090 M618,1100 L678,1082 L706,1185 L640,1205 M618,1100 L622,1135 L655,1122 Q680,1120 678,1160 Q660,1190 638,1195 Q640,1260 605,1308 M785,1150 Q780,1120 800,1108 Q830,1125 835,1138 M752,1170 L765,1150 M762,1222 L895,1192',
      'M735,910 Q735,860 772,838 M802,835 Q860,845 860,910 L852,930 M750,938 Q795,978 835,942',
      'M60,1365 L205,1322 M72,1278 L78,1302 M90,1275 L95,1298 M145,1310 Q160,1260 190,1265 Q210,1275 208,1320 M150,1310 L165,1312 M155,1285 L175,1288 M195,1330 L228,1465 M60,1365 L80,1460',
      'M30,1412 L48,1415 Q55,1470 90,1465 Q120,1462 135,1450 Q150,1445 146,1465 Q120,1510 85,1505 Q40,1490 30,1412Z',
      'M332,1340 Q345,1300 390,1315 M340,1350 Q350,1320 388,1318 M875,1325 Q875,1280 910,1282 Q945,1290 942,1335 M858,1366 L944,1383 M850,1391 L916,1403',
      'M436,1490 L445,1540 Q455,1560 470,1545 L480,1530 L498,1520 Q530,1515 532,1500 L485,1462 M455,1490 L478,1530 M470,1480 L500,1520',
    ],
  },
  {
    x: 440,
    y: 840,
    circles: [
      [282, 87, 13], [575, 82, 13], [1060, 96, 13], [148, 267, 13], [101, 316, 13], [306, 379, 13], [553, 376, 13],
      [892, 320, 13], [1032, 392, 13], [972, 509, 13], [1087, 555, 13], [254, 570, 13], [448, 605, 13],
      [672, 705, 13], [227, 743, 13], [341, 785, 13], [1068, 817, 13], [360, 1006, 13], [1059, 977, 13],
      [989, 981, 13], [896, 1078, 13], [348, 1201, 13], [692, 1176, 13], [88, 1289, 13], [232, 1307, 13],
      [573, 1345, 13], [1032, 1341, 13], [50, 1366, 13], [225, 135, 21], [471, 250, 21], [968, 111, 21],
      [795, 309, 21], [746, 472, 21], [502, 542, 21], [817, 533, 21], [1032, 580, 21], [732, 758, 21],
      [653, 856, 21], [399, 917, 21], [763, 896, 21], [469, 985, 21], [1032, 880, 21], [558, 1133, 21],
      [775, 1120, 21], [1107, 1066, 21], [780, 206, 29], [524, 885, 28], [1098, 1380, 29],
      [597, 992, 7], [688, 1032, 8], [439, 1286, 20], [488, 1282, 20], [434, 1278, 6], [482, 1274, 6],
      [429, 32, 4], [471, 54, 4], [491, 101, 4], [476, 152, 4],
    ],
    stamps: [
      ['moon', 367, 540], ['moon', 1003, 1062], ['moon', 1180, 260], ['bolt', 896, 455, 0, 1.35], ['bolt', 150, 1368],
      ['cloud', 718, 380, 0, 1.3], ['cloud', 303, 1366], ['cloud', 944, 1388], ['arrow', 862, 130, 15],
      ['arrow', 1050, 470, 35, 1.2], ['arrow', 240, 1028, 40, 0.8], ['arrow', 600, 1218, -15],
    ],
    shapes: [
      // call-me hands
      'M60,45 Q80,25 92,45 L75,85 C110,100 140,120 158,165 C165,200 120,220 85,217 C40,210 10,190 15,150 Q20,110 60,45Z',
      'M220,200 Q235,180 260,188 L290,205 L305,232 L340,200 Q360,195 358,215 L312,275 L340,288 Q355,300 345,315 L260,325 Q200,320 188,270 Q188,230 220,200Z',
      'M410,312 Q435,290 446,308 L420,352 L470,385 L492,415 L520,422 Q540,430 530,445 L480,470 C430,495 370,480 348,430 Q345,385 410,312Z',
      'M640,472 Q662,458 674,475 L640,520 L685,545 L722,520 Q750,512 748,535 L692,590 L725,598 Q742,608 728,625 L650,640 Q580,640 564,590 Q560,550 640,472Z',
      // corn
      'M590,165 C600,130 640,95 690,98 Q715,110 712,150 L690,205 L650,238 L595,215Z',
      'M548,302 C510,270 510,200 568,150 C590,175 605,205 600,240 Q640,225 695,242 C670,300 620,335 560,318Z',
      'M540,300 L562,318 L548,330 L530,315Z',
      // padlock
      'M928,270 Q925,245 950,238 L1050,207 Q1075,205 1085,230 L1098,280 Q1102,315 1070,332 L990,362 Q955,368 945,335Z',
      // baby bottle
      'M170,365 Q160,330 185,325 Q205,325 208,345 L235,350 Q250,358 255,372 L262,395 L292,480 Q298,505 275,515 L215,533 Q185,535 175,505 L160,425 L148,415 L146,395 Q150,375 170,365Z',
      // girl hiking
      'M50,550 Q60,530 80,545 L95,580 L115,545 Q140,530 146,555 L140,575 C180,580 210,630 195,660 Q175,700 150,695 L120,700 L105,708 L80,718 L60,715 L65,690 Q40,680 42,655 Q40,610 80,590Z',
      'M-135,780 Q-155,800 -160,850 L-155,885 L-55,888 L-60,880 L-100,815 L-108,780Z',
      'M-120,898 L-145,950 L-120,1075 L-45,1115 L-25,1130 L-25,1160 Q-35,1185 -60,1178 L-130,1140 L-110,1085 L-35,1060 L-50,968Z',
      'M-250,1100 Q-245,1065 -205,1070 L-110,1085 L-140,1120 L-160,1115 L-150,1140 L-40,1178 L-18,1135 Q0,1160 40,1160 L120,1195 L90,1240 L-150,1245 L-190,1190 Q-250,1150 -250,1100Z',
      'M55,715 C10,740 -25,770 -30,790 L20,815 L65,880 L40,980 Q-10,1000 -95,905 L-85,890 L-30,885 Q20,880 45,815 L118,840 L165,970 Q120,1005 40,990 Z',
      'M60,990 L55,1070 L85,1120 L110,1175 L205,1160 Q215,1170 215,1240 L95,1240 Q80,1200 125,1195 L110,1175 L182,1150 L172,1095 L138,1050 L145,985',
      'M110,705 Q140,740 135,800 Q160,830 148,860 L135,868 L118,840 L135,790',
      // pin
      'M300,603 L312,612 L308,628 L345,650 Q362,655 358,668 L338,670 L320,690 L298,715 Q288,715 288,705 L270,668 L248,662 Q240,655 248,645 L278,625Z',
      // signature bubble
      'M390,745 C385,700 410,675 450,665 L540,648 Q590,640 610,690 L625,760 L648,788 Q650,795 640,796 L480,830 C420,835 400,810 390,745Z',
      // apple
      'M250,848 C290,820 340,830 342,880 C340,920 310,970 280,955 Q262,940 245,950 C210,955 180,910 187,870 C195,830 225,830 250,848Z',
      'M250,845 Q200,845 206,805 Q245,800 250,845 L262,800 L292,818 L252,862Z',
      // mug
      'M765,1000 L800,1000 Q830,1015 820,1040 Q790,1085 745,1080Z',
      'M578,925 Q590,905 620,910 C700,915 770,960 780,1000 C790,1060 740,1110 670,1113 C600,1115 560,1060 562,1000Z',
      // cloud sync
      'M370,1060 Q380,1040 410,1050 C470,1025 505,1060 500,1120 Q520,1140 510,1165 Q500,1195 465,1190 L350,1155 C315,1130 310,1075 370,1060Z',
      // sleepy dome
      'M382,1335 Q372,1335 378,1320 C400,1250 440,1225 485,1227 C530,1230 548,1270 546,1310 Q545,1325 530,1325Z',
      // turtle
      'M750,1210 Q750,1175 770,1176 Q792,1182 786,1210Z M860,1305 Q890,1300 888,1325 Q880,1345 848,1338Z M685,1265 Q640,1258 642,1280 Q645,1300 670,1295Z M695,1380 L665,1410 Q640,1425 625,1405 Q615,1385 640,1375 L675,1345Z M745,1390 Q738,1425 760,1425 Q780,1420 782,1388Z',
      'M680,1250 C710,1220 760,1200 800,1207 C850,1220 870,1270 860,1310 C840,1370 790,1400 740,1395 C690,1380 655,1310 680,1250Z',
      'M745,1262 C770,1250 800,1250 812,1275 C820,1300 790,1330 765,1345 C740,1355 712,1335 716,1308 Q725,1275 745,1262Z',
      // football
      'M860,1150 Q862,1135 880,1130 C950,1115 1000,1120 1040,1155 C1075,1190 1095,1240 1090,1265 Q1080,1290 1010,1293 C920,1290 870,1220 860,1150Z',
      // double check
      'M820,950 Q825,935 840,942 L862,965 L928,900 Q942,898 942,910 L870,988 Q862,994 852,986Z',
      'M895,985 L972,905 Q986,902 986,914 L912,996 Q895,1002 895,985Z',
      'M740,680 C740,620 790,600 835,608 C850,540 990,540 1015,625 L1060,660 C1050,780 1030,800 985,808 Q955,815 945,850 L930,868 Q920,872 910,866 L825,838 L875,815 L870,760Z',
    ],
    lines: [
      'M60,80 Q40,110 45,132 Q60,140 80,100 M82,88 Q100,85 98,100 L65,140 Q80,160 100,115 Q120,115 115,130 L92,162 Q110,170 130,135 Q150,140 125,165 M125,160 L130,178',
      'M395,36 A76,76 0 1 0 452,172 M382,78 Q378,60 395,65 L412,60 L448,130 Q448,142 436,140 L408,78Z',
      'M215,225 Q225,245 240,225 L258,195 M240,245 Q250,260 260,240 L280,208 M255,262 Q270,278 280,250 L298,230 M275,272 L300,248 M298,280 L318,275',
      'M388,388 L418,350 M390,392 Q400,410 420,390 L448,360 M410,410 Q425,430 442,400 L468,385 M435,430 Q450,450 465,415 M478,428 L500,425',
      'M605,550 L640,512 M605,552 Q625,570 645,550 L665,530 M630,575 Q645,595 660,562 M655,590 L672,565 M670,590 L700,592',
      'M592,180 Q620,160 640,200 M600,150 L685,205 M620,125 L705,172 M645,105 L712,150 M620,228 L700,110 M605,195 L670,100 M650,235 L705,150 M568,150 C545,200 540,250 550,300 M690,245 C640,260 590,270 552,312 M600,240 Q600,270 570,295',
      'M940,235 Q930,170 965,155 Q1000,150 1022,205 M965,220 Q955,185 975,183 Q985,185 992,215 M1003,264 m-17,0 a17,17 0 1 1 26,14 l38,28 l-50,22 l6,-46 q-18,-4 -20,-18',
      'M150,415 L262,378 M155,425 L262,395 M172,462 L190,456 M178,480 L186,478 M182,495 L205,488',
      'M58,625 L72,628 M52,640 L68,640 M60,660 L72,662 M120,600 Q130,640 165,675 M90,600 L110,640 M120,668 Q95,680 105,700 Q120,690 145,665 M80,590 L95,582 M95,585 Q85,620 100,640',
      'M-30,790 L20,815 M70,755 Q60,830 20,850 M85,1120 L172,1095 M95,1152 L182,1125 M-130,1050 L-35,1018 M-130,900 L-163,1150 M-180,1135 L-145,1135',
      'M-140,790 Q-150,770 -130,762 L-90,762 Q-78,775 -85,790 L-140,795 M-240,1150 Q-215,1140 -205,1165 Q-185,1175 -180,1200 Q-150,1205 -120,1240',
      'M200,1145 L240,1185 L246,1105 L262,1182 L285,1145 L280,1225 L300,1200 L298,1240 M230,1180 L246,1212 M257,1225 V1240 M-150,1245 L322,1246',
      'M325,690 L360,722 Q365,712 355,705 L342,685',
      'M460,740 Q480,700 510,712 Q530,740 490,770 Q470,780 490,775 L515,750 Q520,770 535,765 Q545,745 566,738',
      'M602,935 C600,915 680,930 740,960 Q770,980 763,995 C740,1010 610,980 602,935Z M600,1018 Q615,1060 660,1052 L670,1046 M770,1030 Q780,1020 796,1025 Q795,1050 760,1058Z M470,903 L497,893',
      'M455,1092 Q430,1075 408,1095 Q392,1125 415,1140 Q445,1150 460,1122 M440,1100 L458,1104 L462,1088',
      'M775,1210 L772,1252 M850,1245 L810,1275 M858,1310 L812,1308 M825,1365 L790,1325 M752,1392 L756,1348 M690,1350 L722,1330 M668,1310 L714,1306 M705,1230 L738,1265',
      'M918,1130 L885,1218 M938,1125 L900,1230 M1052,1185 L1005,1290 M1070,1200 L1028,1292 M932,1170 L1022,1215 M950,1165 L940,1190 M970,1170 L962,1200 M992,1180 L980,1208 M1008,1188 L998,1218 M1022,1198 L1012,1222',
    ],
  },
  {
    x: 0,
    y: 1270,
    circles: [
      [775, 184, 13], [545, 147, 13], [168, 266, 13], [570, 251, 13], [439, 308, 13], [302, 371, 13], [1175, 341, 13],
      [1335, 324, 13], [1113, 561, 13], [565, 591, 13], [558, 677, 13], [885, 698, 13], [217, 789, 13], [69, 811, 13],
      [632, 777, 13], [448, 862, 13], [769, 916, 13], [931, 862, 13], [270, 1030, 13], [683, 1083, 13],
      [565, 1143, 13], [642, 1147, 13], [978, 1110, 13], [1044, 1147, 13], [379, 1173, 13], [189, 1251, 13],
      [603, 1262, 13], [1240, 996, 13], [1376, 738, 13], [1133, 1273, 13], [327, 287, 21], [20, 358, 21],
      [1133, 494, 21], [886, 532, 21], [209, 600, 21], [334, 610, 21], [687, 866, 21], [1010, 853, 21],
      [1245, 881, 21], [917, 987, 21], [586, 1067, 21], [805, 1173, 21], [498, 627, 29], [186, 708, 29],
      [946, 1272, 107], [1277, 1249, 68], [919, 1211, 3], [940, 1205, 3], [480, 777, 8], [70, 415, 23], [75, 459, 22],
      [81, 501, 22], [224, 396, 23], [231, 439, 22], [236, 482, 22],
    ],
    stamps: [
      ['spark', 820, 622], ['bolt', 255, 242], ['moon', 890, 422], ['plus', 1308, 1118, 25, 0.95],
      ['flag', 1394, 1222, 35],
    ],
    shapes: [
      // paper plane
      'M585,182 L700,116 Q712,114 712,125 L692,250 Q685,262 675,255 L648,222 L672,165 L632,208 L590,195 Q580,190 585,182Z',
      // sun
      'M1168,-10 L1200,52 L1160,55Z M1300,12 L1275,80 L1240,65Z M1356,122 L1302,160 L1295,115Z M1342,252 L1275,225 L1300,190Z M1244,322 L1200,255 L1243,250Z M1108,302 L1128,225 L1165,248Z M1032,186 L1095,158 L1100,188Z M1050,57 L1130,80 L1102,112Z',
      'M1200,53 a100,100 0 1 0 1,0Z',
      // log cabin
      'M68,332 L115,327 L75,385Z M136,317 L230,375 L75,395Z',
      'M125,415 L178,410 L182,480 L130,484Z',
      // mountains and house
      'M260,546 L398,355 L452,430 L522,303 L580,410 L600,546Z',
      'M600,300 Q660,290 664,318 Q662,335 650,338 L650,370 L608,380 L608,338 Q595,325 600,300Z',
      'M602,430 L682,385 L760,430 L760,546 L602,546Z',
      'M550,420 L660,352 Q682,340 705,352 L805,418 Q820,435 800,448 Q785,452 775,445 L682,386 L590,442 Q560,460 548,435Z',
      // beanie
      'M610,705 C600,640 640,600 680,603 C720,600 752,640 752,680 L765,682 Q772,702 760,712 L625,742 Q605,740 606,720Z',
      // shrimp
      'M330,792 C250,800 240,730 290,690 C340,650 420,660 445,715 L478,775 L498,825 L410,785 Q395,760 400,740 Q370,720 345,745 Q320,770 335,830 L390,865 L388,892 L350,915 L322,920 L305,850 Q260,800 258,770',
      // hammer
      'M752,790 L775,785 L782,840 L765,844Z M782,795 C810,745 890,740 925,790 Q935,805 915,805 Q870,780 875,850 L900,940 L858,952 L832,858 Q825,820 785,820Z',
      // tree
      'M165,995 L168,1054 L217,1046 L205,990Z',
      'M138,768 Q145,760 152,770 L220,860 L208,865 L252,915 L235,918 L276,965 Q275,975 255,965 L248,988 L232,980 L215,995 L205,975 L185,1000 L170,978 L152,998 L140,985 L118,1000 L105,985 L85,1002 Q82,990 100,940 L88,938 L112,880 L100,878Z',
      // mushroom
      'M400,1010 C370,1050 320,1080 326,1095 Q345,1125 375,1122 Q400,1100 425,1050 Z',
      'M362,975 C400,945 480,970 490,1045 Q490,1075 475,1068 L435,1045 L420,1058 L410,1020 L385,1022 L395,1005Z',
      // snowboard
      'M520,940 C518,880 580,860 620,890 C700,950 780,990 880,1025 C950,1050 945,1130 890,1147 Q860,1150 830,1130 C740,1060 650,1020 560,990 Q525,975 520,940Z',
      // drum
      'M985,990 L1135,890 C1170,940 1170,985 1158,1010 L1228,1090 L1125,1158 L1082,1055 Q1020,1060 985,990Z',
      'M958,965 L1125,862 L1142,885 L972,994Z',
      // surfboard
      'M1285,1040 C1280,900 1380,780 1508,742 C1515,860 1440,1010 1300,1060 Q1286,1058 1285,1040Z',
      'M1352,878 L1385,892 L1405,845 L1445,872 L1405,935 L1382,925 L1353,968Z',
      // island
      'M1100,645 C1150,555 1240,565 1260,605 L1200,645Z',
      'M1285,600 Q1290,540 1258,475 Q1320,520 1328,600Z',
      'M1245,445 C1240,380 1260,350 1280,358 C1285,390 1265,420 1255,432 C1290,390 1330,385 1330,410 Q1310,435 1262,448 C1310,450 1315,480 1305,488 Q1280,480 1250,455 C1265,500 1260,530 1245,528 Q1225,515 1235,458 C1210,500 1190,530 1180,515 Q1185,480 1220,450 C1160,430 1150,405 1165,400 Q1215,400 1245,445Z',
      'M1165,690 C1210,570 1370,560 1440,690Z',
      // rocket
      'M0,1185 C50,1110 130,1075 185,1100 C210,1160 180,1230 108,1285Z',
      // peace hand and astronaut
      'M262,1290 L265,1225 Q248,1180 262,1172 Q285,1160 292,1180 L282,1140 Q285,1120 300,1130 L308,1165 L320,1130 Q335,1125 330,1145 L325,1180 Q350,1200 335,1235 L345,1290Z',
      'M345,1275 Q380,1265 420,1280',
      'M408,1250 C395,1180 440,1150 485,1157 C540,1165 560,1220 548,1260 Q530,1310 480,1310 Q420,1300 408,1250Z',
      'M655,1192 L758,1184 L728,1212 L756,1238 L660,1248 L665,1290',
      'M1175,1176 L1192,1182 L1188,1210 L1162,1206 L1158,1184Z',
      // planet ring
      'M1030,1202 L1085,1186 Q1108,1188 1100,1202 Q1070,1240 990,1282 L1054,1245Z',
      // key
      'M62,640 L78,565 Q95,555 112,568 L108,590 L98,605 L105,620 L95,650 C130,670 125,720 100,738 Q60,745 35,725 C10,700 10,650 62,640Z',
    ],
    lines: [
      'M705,340 C780,180 990,160 1080,320 C1120,400 1100,470 1065,540 C1030,600 1050,680 1110,710 Q1160,725 1210,695 M795,405 C830,300 960,300 990,395 C1010,470 950,520 942,590 C930,720 1030,820 1145,822 C1240,820 1310,770 1335,695',
      'M745,370 L757,338 M797,295 Q825,272 857,268 M917,268 Q950,274 976,290 M1018,328 Q1040,352 1047,382 M1050,438 Q1048,468 1034,494 M1018,532 Q1002,560 1000,588 M1000,646 Q1004,680 1022,708 M1062,748 Q1085,765 1118,770 M1168,763 Q1195,758 1220,742 M1258,714 L1280,696',
      'M1150,130 Q1152,195 1202,197 Q1250,190 1252,150 M1189,127 h2 M1217,132 h2',
      'M95,395 L205,380 M100,435 L205,425 M100,475 L125,470 M185,462 L208,458 M95,522 L235,502 M90,412 L88,435 M85,255 Q105,270 90,290 L103,315',
      'M342,440 L362,432 L380,425 Q378,458 388,458 L408,422 L452,430 M475,392 L502,372 Q500,418 514,420 L525,378 L570,390 M535,546 Q600,490 695,528 Q760,500 814,546 L260,546',
      'M652,434 H710 V493 H652Z M681,434 V493 M652,464 H710',
      'M606,705 L752,680 M635,600 L655,590 L648,575 L668,585 L680,570 L685,590 L695,600 L680,605 L672,625 L660,608 L645,620Z',
      'M437,583 C410,630 430,670 470,690 C540,730 590,760 570,805 Q550,840 498,825 C560,870 630,840 680,790 Q720,750 760,752 Q785,745 792,725 M690,795 q15,-20 32,0 q0,18 -18,18 q-14,-2 -14,-18',
      'M290,690 L330,740 M335,668 L335,735 M385,675 L358,730 M425,690 Q390,700 370,725 M265,735 Q300,745 325,780 M345,755 L348,775 M362,752 L365,772 M378,758 L385,765 M305,850 L340,830 M310,860 L335,918 M340,835 L390,885 M445,715 L480,777',
      'M832,858 L875,850',
      'M128,880 Q130,892 140,892 Q150,885 148,872 M165,930 L182,948 L190,930 Q200,950 214,930',
      'M362,975 L435,1045 M375,1020 L400,1010 M380,990 L470,1065 M420,1060 L430,1030',
      'M618,1000 Q610,985 640,942 Q670,930 670,960 L648,1005Z M612,970 L655,980 M620,985 L655,1000 M798,1090 Q790,1075 818,1035 Q850,1025 850,1050 L828,1098Z M795,1062 L838,1075 M800,1080 L840,1095 M625,962 Q650,945 665,962 M805,1052 Q830,1040 848,1052',
      'M1028,965 L1048,1048 M1028,965 L1118,1035 L1085,928 M1088,925 L1162,985 M1112,1125 L1205,1070 M965,975 L1135,868 M1082,1055 Q1130,1060 1160,1010',
      'M1435,845 L1508,745 M1290,1055 L1352,960',
      'M130,1160 m-35,0 a35,35 0 1 0 70,0 a35,35 0 1 0 -70,0 M130,1160 m-20,0 a20,20 0 1 0 40,0 a20,20 0 1 0 -40,0',
      'M0,1245 Q30,1235 45,1270 Q45,1310 10,1320 M10,1260 q20,10 18,25 M-5,1275 q15,5 12,20',
      'M412,1225 C440,1150 530,1170 527,1240 Q510,1275 460,1272 Q420,1265 412,1250 M490,1195 Q505,1210 508,1228 M262,1172 Q275,1165 282,1190 M290,1165 Q298,1195 275,1210 M895,1232 Q905,1270 935,1270 Q975,1265 975,1228 M1256,1226 L1302,1246 L1266,1276Z',
      'M62,712 m-12,0 a12,12 0 1 0 24,0 a12,12 0 1 0 -24,0 M62,712 L5,768 M-5,760 L15,775',
    ],
  },
  {
    x: 440,
    y: 1270,
    circles: [
      [383, 158, 13], [605, 177, 13], [1034, 158, 13], [277, 261, 13], [15, 324, 13], [688, 404, 13], [290, 463, 13],
      [1102, 482, 13], [950, 543, 13], [1034, 543, 13], [264, 666, 13], [354, 692, 13], [905, 653, 13], [56, 738, 13],
      [846, 884, 13], [155, 1045, 13], [262, 1066, 13], [965, 1047, 13], [661, 1130, 13], [981, 1166, 13],
      [493, 1255, 13], [332, 1275, 13], [776, 1275, 13], [1024, 281, 21], [366, 502, 21], [861, 518, 21],
      [1113, 573, 21], [250, 760, 21], [968, 750, 21], [886, 808, 21], [188, 970, 21], [855, 998, 21],
      [593, 1172, 21], [1075, 671, 29], [123, 1118, 29], [114, 201, 40], [212, 175, 40], [163, 411, 39],
      [480, 133, 29], [750, 261, 101], [983, 909, 53], [176, 428, 4], [479, 535, 5], [612, 680, 4], [645, 675, 4],
    ],
    stamps: [
      ['spark', 973, 218], ['spark', 82, 530], ['spark', 258, 865], ['spark', 1116, 1046], ['spark', 738, 1188],
      ['bolt', 984, 630], ['cloud', 417, 1210, -15], ['arrow', 817, 412], ['arrow', 1043, 1148, 15],
      ['plus', 745, 512, -8, 0.95], ['plus', 610, 482, 20, 0.85], ['lock', 845, 728, -40], ['flag', 432, 645, 10],
    ],
    shapes: [
      // fried egg
      'M150,295 Q160,255 195,253 Q230,265 262,320 Q268,345 240,395 C250,430 250,470 200,490 Q150,500 110,450 C80,430 55,420 58,380 C70,330 130,340 150,295Z',
      // buildings
      'M320,240 Q320,230 330,228 L430,212 Q445,212 448,225 L472,438 L345,454Z',
      'M455,260 L580,242 Q595,242 598,255 L618,420 L472,438Z',
      // plant pot
      'M905,325 Q915,315 960,322 L1060,345 Q1085,350 1080,362 L1075,408 L1058,412 L1015,500 Q960,508 915,485 L908,385 L897,375Z',
      // lego tag
      'M1075,250 L1085,232 L1102,230 L1108,238 L1125,225 Q1140,220 1145,235 L1156,260 Q1158,270 1150,274 L1105,292 Q1095,294 1092,284Z',
      // croissant
      'M205,660 C190,700 210,705 200,708 Q150,700 148,662 Q125,650 138,620 C150,540 220,500 240,512 Q280,510 300,530 C330,535 345,570 340,585 Q370,620 342,646 Q325,650 322,640 Q340,610 318,608 Q290,595 240,622 L210,640Z',
      'M472,492 L515,520 Q520,535 512,545 L495,568 Q485,573 475,568 L438,540Z',
      'M822,576 L852,600 L826,632 L796,608Z',
      // laptop
      'M340,965 L262,978 L365,1125 Q372,1138 385,1137 L750,1070 Q768,1060 767,1040 L648,1058Z',
      'M305,775 Q302,755 325,748 L765,680 L810,935 Q812,955 790,960 L385,1038 Q360,1038 355,1020Z',
      // woman
      'M545,785 C540,750 560,740 520,735 Q480,710 500,680 Q485,640 540,625 C530,570 590,560 612,582 C620,540 690,540 690,595 C740,580 760,620 735,640 C780,650 775,700 745,710 Q740,750 700,755 L640,770 L590,775Z',
      'M575,670 C575,610 690,600 690,670 Q710,690 688,705 Q675,752 635,755 Q590,750 580,720 Q560,725 565,710 Q565,700 578,700Z',
      'M585,775 L645,798 L695,755 L785,805 L778,955 L520,1005 Q470,1000 462,950 Q458,910 480,885Z',
      // avocado baby
      'M1120,770 C1140,820 1135,870 1120,930 C1090,1030 1000,1040 950,1000',
      'M905,880 C910,830 980,820 1020,775 C1060,740 1110,750 1120,790 Q1110,860 1090,930 C1070,1000 1010,1020 960,1000 C910,980 895,930 905,880Z',
      // photos
      'M795,1100 L920,1075 Q930,1074 932,1082 L952,1210 L820,1238 Q815,1238 812,1230Z',
      'M915,1188 L1040,1245 L995,1340 L870,1290Z',
      // bun girl
      'M218,1175 C215,1120 290,1110 288,1170 Q285,1195 270,1205 M150,1245 C150,1190 190,1172 215,1175 C260,1175 285,1210 283,1245 L275,1290 L160,1290Z',
      'M565,1245 Q610,1240 630,1255 Q680,1240 720,1260 L722,1290 L600,1290Z',
      'M1110,1185 C1160,1110 1240,1075 1295,1100 C1320,1160 1290,1230 1218,1285Z',
    ],
    lines: [
      'M150,180 L172,172 M75,205 L60,212 Q65,222 78,215 M98,240 L86,265 Q92,275 102,265 L110,242 M250,160 Q268,152 266,165 L252,172 M245,195 L275,205 Q280,215 262,212 L240,205',
      'M178,395 Q188,402 188,412 M502,158 L520,176',
      'M355,270 l22,-4 l2,22 l-22,4Z M400,264 l22,-4 l2,22 l-22,4Z M358,306 l22,-4 l2,22 l-22,4Z M404,298 l22,-4 l2,22 l-22,4Z M362,341 l22,-4 l2,22 l-22,4Z M408,335 l22,-4 l2,22 l-22,4Z M495,296 l22,-4 l2,22 l-22,4Z M540,290 l22,-4 l2,22 l-22,4Z M500,332 l22,-4 l2,22 l-22,4Z M545,325 l22,-4 l2,22 l-22,4Z M392,445 L388,396 L416,392 L424,442 M532,428 L528,376 L554,373 L562,425',
      'M740,248 L778,272 L768,312 L725,318 L704,275Z M708,182 L745,205 L782,185 L775,168 M815,215 L808,255 L835,282 L845,250 L838,218Z M660,220 L675,210 L672,255 L655,285 M670,315 L705,330 L712,350 M790,340 L800,318 L832,308 M785,165 L850,142 Q825,180 845,190 L935,168 Q860,215 862,240 Q870,265 920,250 Q890,290 848,298',
      'M897,375 Q960,415 1058,412 M910,340 Q960,370 1075,360',
      'M165,545 L225,622 M235,512 L245,615 M300,530 L292,600 M340,580 L322,610 M138,620 L205,640 M148,662 L205,660',
      'M450,730 L500,1010 M765,695 L785,805 M355,848 L442,830 M367,914 L455,897 M330,768 L350,784 M350,766 L332,786 M365,1115 L648,1058 L590,1000 M765,1042 L360,1115',
      'M568,680 C570,640 600,628 632,630 Q680,635 685,680 M598,672 L608,666 M645,660 L660,662 M625,700 Q640,705 648,698 M645,718 L658,712 M568,825 Q545,860 560,900 M540,908 L630,890 L642,980 M725,800 Q760,820 765,865 L778,955 M662,865 L758,850 M662,865 L665,888 L700,888 Q730,900 722,940 Q710,975 660,975 M630,890 L655,888 M690,680 Q712,688 700,705',
      'M1015,800 Q1020,815 1035,812 M1018,825 Q1025,845 1042,840 M1045,820 Q1050,838 1068,835 M978,880 Q985,870 995,878 M975,890 Q985,905 1000,895 M965,940 Q985,950 1002,942 M940,875 L960,870 L965,850 M1030,908 L1048,895 M1030,915 L1048,925 M1005,882 L1015,890',
      'M808,1112 L918,1092 L932,1170 L824,1192Z M922,1202 L1020,1245 M915,1225 L880,1290',
      'M195,1138 L232,1172 M145,1245 Q200,1255 216,1218 Q240,1260 283,1250 M175,1265 Q185,1258 192,1265 M225,1265 Q235,1258 242,1265 M195,1278 Q205,1285 215,1278 M272,1190 L290,1215',
      'M1195,255 Q1215,270 1200,290 L1213,310',
    ],
  },
];

function PanelGroup({ panel }: { panel: DoodlePanel }) {
  return (
    <g transform={`translate(${panel.x} ${panel.y}) scale(0.3333)`}>
      {panel.shapes.map((d) => (
        <path key={d} d={d} className="fill-[#0b1014]" />
      ))}
      {panel.lines.map((d) => (
        <path key={d} d={d} />
      ))}
      {panel.circles.map(([cx, cy, r], i) => (
        <circle key={i} cx={cx} cy={cy} r={r} />
      ))}
      {panel.stamps.map(([name, x, y, angle = 0, size = 1], i) => (
        <path key={i} d={STAMPS[name]} transform={`translate(${x} ${y}) rotate(${angle}) scale(${size})`} />
      ))}
    </g>
  );
}

function Wallpaper() {
  return (
    <svg className="absolute inset-0 h-full w-full" aria-hidden="true">
      <defs>
        <g id="doodles" fill="none" stroke="#24292d" strokeWidth="6" strokeLinejoin="round" strokeLinecap="round">
          {PANELS.map((panel, i) => (
            <PanelGroup key={i} panel={panel} />
          ))}
        </g>
      </defs>
      {[-1, 0, 1, 2].map((col) =>
        [-1, 0, 1].map((row) => <use key={`${col}${row}`} href="#doodles" x={col * TILE_W} y={row * TILE_H} />),
      )}
    </svg>
  );
}

function StatusBar() {
  return (
    <div className="flex h-[72px] items-center justify-end gap-[7px] pr-[30px] text-white">
      {/* NFC */}
      <svg width="24" height="28" viewBox="0 0 24 28" fill="none" stroke="currentColor" strokeWidth="3">
        <path d="M8 2C0 9 0 18 8 26l4-5C7 17 8 12 13 7" />
        <path d="M16 2c8 7 8 16 0 24M16 2l-4 5c5 4 4 9-1 14M9 2l3 5M16 26l-4-5" />
      </svg>
      {/* Bluetooth */}
      <svg width="22" height="28" viewBox="0 0 22 28" fill="none" stroke="currentColor" strokeWidth="3" strokeLinejoin="round">
        <path d="M3 6l15 14-7 6V2l7 6L3 22" />
        <path d="M1 11l3 3-3 3zM21 11l-3 3 3 3z" fill="currentColor" stroke="none" />
      </svg>
      <MdNotificationsOff className="h-8 w-8" />
      {/* Wi-Fi */}
      <svg width="36" height="30" viewBox="0 0 36 30" fill="none" stroke="currentColor" strokeWidth="3.2" strokeLinecap="round">
        <path d="M2 10C11 1 25 1 34 10M7 15c6-6 15-6 21 0M12 20c3-3 8-3 11 0" />
        <circle cx="17" cy="25" r="3.6" fill="currentColor" stroke="none" />
        <path d="M28 21v8l-4-4zM31 21v8l4-4z" fill="currentColor" stroke="none" />
      </svg>
      <div className="flex items-center gap-[2px]">
        <div className="flex h-[30px] w-[54px] items-center justify-center rounded-[10px] border-2 border-white bg-linear-to-r from-[#46494c] from-58% to-transparent to-58% text-[24px] leading-none font-bold">
          56
        </div>
        <div className="h-[10px] w-[4px] rounded-full bg-white" />
      </div>
    </div>
  );
}

function Header() {
  return (
    <header className="relative z-10 border-b-2 border-[#171c20] bg-[#0b1014]">
      <StatusBar />
      <div className="flex h-[124px] items-center pr-[22px] pl-[29px] text-[#f7f8fa]">
        <div className="flex h-[79px] w-[79px] items-center justify-center rounded-full bg-[#152c31] text-[38px] text-[#a5dfd5]">
          A
        </div>
        <h1 className="ml-[46px] flex-1 text-[39px]">Agung RAS BTN KC Bintaro Jaya</h1>
        <button type="button" aria-label="Panggilan video">
          <svg width="48" height="40" viewBox="0 0 48 40" fill="none" stroke="currentColor" strokeWidth="4.6">
            <rect x="3.3" y="4.3" width="32" height="32" rx="2.5" />
            <path d="M36 20l10-11v22z" fill="currentColor" stroke="none" />
          </svg>
        </button>
        <button type="button" aria-label="Panggilan suara" className="ml-[57px]">
          <MdOutlineCall className="h-[54px] w-[54px]" />
        </button>
        <button type="button" aria-label="Opsi lainnya" className="ml-[41px]">
          <MdMoreVert className="h-[54px] w-[54px]" />
        </button>
      </div>
    </header>
  );
}

function DateChip({ children }: { children: React.ReactNode }) {
  return (
    <div className="flex h-[59px] items-center self-center rounded-[18px] bg-[#12181c] px-5 text-[30px] text-[#8d9598]">
      {children}
    </div>
  );
}

function Tail() {
  return (
    <svg className="absolute top-0 left-full -ml-px" width="17" height="24" viewBox="0 0 17 24" aria-hidden="true">
      <path d="M0 0h15q3 1 1 4L0 23z" fill="#264a39" />
    </svg>
  );
}

function MessageText({ text, time }: { text: string; time: string }) {
  return (
    <p className="px-[22px] text-[38px] leading-[42px] whitespace-pre-line text-[#f4f7f5]">
      {text}
      <span className="float-right mt-5 -mb-2 flex h-7 items-center gap-2 text-[28px] text-[#9fb3a8]">
        {time}
        <svg width="38" height="24" viewBox="0 0 38 24" fill="none" stroke="currentColor" strokeWidth="3" strokeLinecap="round">
          <path d="M2 14l8 7L24 2M17 19l2 2L36 2" />
        </svg>
      </span>
    </p>
  );
}

interface DocumentMessageProps {
  title: string;
  size: string;
  text: string;
  time: string;
}

function DocumentMessage({ title, size, text, time }: DocumentMessageProps) {
  return (
    <div className="mr-[38px] flex items-center gap-[18px] self-end">
      <button
        type="button"
        aria-label="Teruskan"
        className="flex h-[72px] w-[72px] items-center justify-center rounded-full bg-[#11181c]/80 text-white"
      >
        <svg width="48" height="36" viewBox="0 0 48 36" fill="none" stroke="currentColor" strokeWidth="4.4" strokeLinecap="round" strokeLinejoin="round">
          <path d="M4 32v-6c0-7 4-10 10-10h19M22 5l11 11-11 11M33 5l11 11-11 11" />
        </svg>
      </button>
      <div className="relative w-[589px] rounded-[26px] rounded-tr-none bg-[#264a39] pt-[10px] pb-4">
        <Tail />
        <div className="mx-[10px] mb-[17px] flex h-[167px] items-center rounded-[18px] bg-[#234135] pr-4 pl-5">
          <svg width="46" height="56" viewBox="0 0 46 56" className="shrink-0" aria-hidden="true">
            <path d="M5 0h24l17 17v34q0 5-5 5H5q-5 0-5-5V5q0-5 5-5z" fill="#468f5a" />
            <path d="M29 0l17 17H32q-3 0-3-3z" fill="#8fbb9b" />
            <text x="23" y="44" textAnchor="middle" fontSize="27" fontWeight="700" fill="#fff" fontFamily="Lato">
              X
            </text>
          </svg>
          <div className="ml-[18px] pt-[6px]">
            <h2 className="text-[34px] leading-10 whitespace-pre-line text-[#f4f7f5]">{title}</h2>
            <p className="mt-3 flex text-[28px] leading-9 text-[#84958d]">
              <span>2 lembar</span>
              <span className="w-[46px] text-center text-[18px]">•</span>
              <span>{size}</span>
              <span className="w-[46px] text-center text-[18px]">•</span>
              <span>XLSX</span>
            </p>
          </div>
        </div>
        <MessageText text={text} time={time} />
      </div>
    </div>
  );
}

function Composer() {
  return (
    <footer className="relative flex items-start justify-between gap-6 pr-[9px] pb-[34px] text-[#8d9598]">
      <div className="flex h-[105px] flex-1 items-center rounded-full bg-[#23282c] pr-7 pl-[22px]">
        <button type="button" aria-label="Stiker">
          <svg width="48" height="48" viewBox="0 0 48 48" fill="none" stroke="currentColor" strokeWidth="4">
            <path d="M17 3.500h14c8 0 13.500 6 13.500 13.500v9L27 44.500H17c-8 0-13.500-6-13.500-13.500V17C3.500 9 9 3.500 17 3.500zM28 44V34c0-5 3-8 8-8h8" strokeLinejoin="round" />
            <circle cx="16" cy="17" r="3.400" fill="currentColor" stroke="none" />
            <circle cx="32" cy="17" r="3.400" fill="currentColor" stroke="none" />
            <path d="M13 27h17l-3 8c-7 1-12-2-14-8z" fill="currentColor" stroke="none" />
          </svg>
        </button>
        <div className="relative ml-6 flex-1">
          <span className="absolute top-0 left-0 h-[58px] w-[5px] bg-white" />
          <input
            type="text"
            aria-label="Pesan"
            placeholder="Pesan"
            className="relative h-[58px] w-full bg-transparent pl-[2px] text-[42px] outline-none placeholder:text-[#8d9598]"
          />
        </div>
        <button type="button" aria-label="Lampirkan" className="mr-[68px]">
          <svg width="32" height="48" viewBox="0 0 32 48" fill="none" stroke="currentColor" strokeWidth="4" strokeLinecap="round">
            <path d="M29 12v21c0 8-5 13-13 13S3 41 3 33V12c0-6 3-9.500 8.500-9.500S20 6 20 12v20c0 3-1.500 4.500-4 4.500s-4-1.500-4-4.500V12" />
          </svg>
        </button>
        <button type="button" aria-label="Kamera">
          <svg width="48" height="44" viewBox="0 0 48 44" fill="none" stroke="currentColor" strokeWidth="4" strokeLinejoin="round">
            <path d="M5 8h10l4-5h10l4 5h10q2 0 2 2v29q0 2-2 2H5q-2 0-2-2V10q0-2 2-2z" />
            <circle cx="24" cy="24" r="8.500" />
          </svg>
        </button>
      </div>
      <button
        type="button"
        aria-label="Rekam pesan suara"
        className="mt-[3px] flex h-[106px] w-[106px] items-center justify-center rounded-full bg-[#fafafa] text-[#0b1014]"
      >
        <svg width="34" height="46" viewBox="0 0 34 46" fill="none" stroke="currentColor" strokeWidth="4" strokeLinecap="round">
          <rect x="10" y="1" width="14" height="28" rx="7" fill="currentColor" stroke="none" />
          <path d="M3 23c1 8 6 12 14 12s13-4 14-12M17 36v7" />
        </svg>
      </button>
    </footer>
  );
}

const App: React.FC = () => {
  return (
    <div className="relative flex h-screen flex-col overflow-hidden bg-[#0b1014] font-[Lato,sans-serif]">
      <Wallpaper />
      <Header />
      <main className="relative flex min-h-0 flex-1 flex-col justify-end gap-[23px] overflow-hidden pb-5">
        <div className="mr-[25px] flex flex-col">
          <DateChip>21 Agustus 2025</DateChip>
        </div>
        <div className="relative mr-[38px] ml-[103px] rounded-[26px] rounded-tr-none bg-[#264a39] pt-[14px] pb-[18px]">
          <Tail />
          <MessageText
            text={'Selamat siang pak, izin pak mau nanya dari BTN KC Bintaro Jaya , ada debitur yg\nmau di bantu untuk GS oleh NLF ga ya pak?'}
            time="13.30"
          />
        </div>
        <div className="mr-[25px] flex flex-col">
          <DateChip>10 September 2025</DateChip>
        </div>
        <DocumentMessage
          title={'BINTARO JAYA - JAKARTA I\nLAPORAN PROGRESS BTN…'}
          size="41 kB"
          text={'Selamat Pagi Pak Agung, izin\nsaya kirimkan Laporan Progress\nsentuhan debitur Agustus\n2025 dan Prognosa September\n2025 Bintaro jaya. Penanganan\nsentuhan debitur akan terus\nkami maksimalkan Pak.\nTerimakasih'}
          time="10.05"
        />
        <div className="mr-[25px] flex flex-col">
          <DateChip>Hari ini</DateChip>
        </div>
        <DocumentMessage
          title={'BINTARO JAYA-JAKARTA\nI-LAPORAN_PROGRESS B…'}
          size="39 kB"
          text={'Selamat Pagi Pak Agung, izin\nsaya kirimkan Laporan Progress\nsentuhan debitur September\n2025 dan Prognosa Oktober\n2025 Bintaro Jaya. Penanganan\nsentuhan debitur akan terus\nkami maksimalkan Pak.\nTerimakasih'}
          time="11.28"
        />
        {/* scroll thumb */}
        <div className="absolute right-0 bottom-[9px] h-[97px] w-[9px] bg-[#4b4f52]" />
      </main>
      <Composer />
    </div>
  );
};

export default App;
